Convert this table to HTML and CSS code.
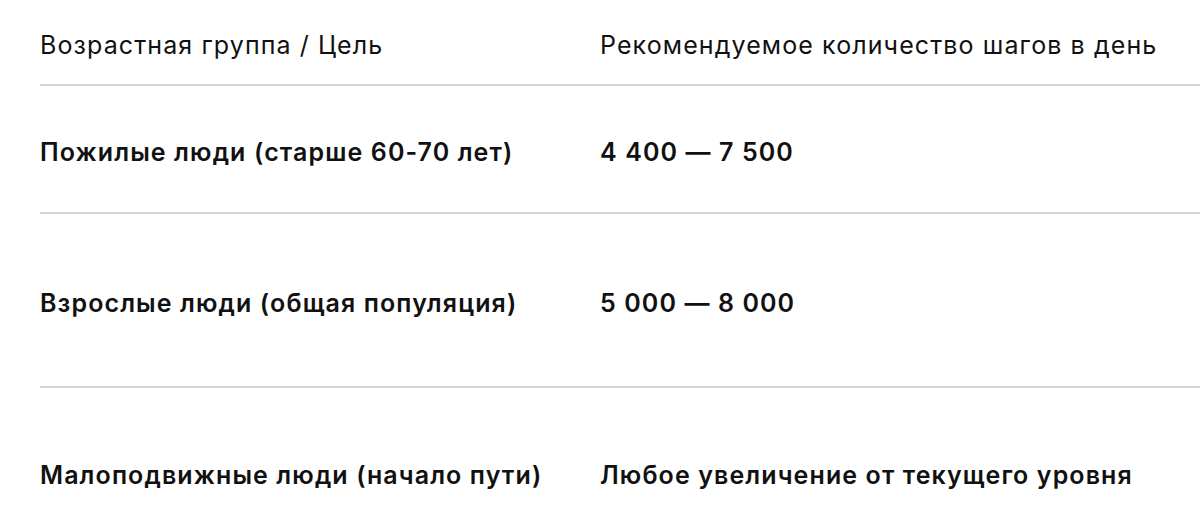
FILE: index.html
```html
<!DOCTYPE html>
<html lang="ru">
<head>
<meta charset="utf-8">
<link rel="stylesheet" href="styles.css">
</head>
<body>
<div class="table">
  <div class="row head">
    <div class="cell c1">Возрастная группа / Цель</div>
    <div class="cell c2">Рекомендуемое количество шагов в день</div>
  </div>
  <div class="row r1">
    <div class="cell c1">Пожилые люди (старше 60-70 лет)</div>
    <div class="cell c2">4 400 — 7 500</div>
  </div>
  <div class="row r2">
    <div class="cell c1">Взрослые люди (общая популяция)</div>
    <div class="cell c2">5 000 — 8 000</div>
  </div>
  <div class="row r3">
    <div class="cell c1">Малоподвижные люди (начало пути)</div>
    <div class="cell c2">Любое увеличение от текущего уровня</div>
  </div>
</div>
</body>
</html>
```
FILE: styles.css
```css
html, body {
  margin: 0;
  padding: 0;
  background: #fff;
  overflow: hidden;
}
body {
  font-family: Inter, "Noto Sans", sans-serif;
  color: #111;
  font-size: 25px;
  letter-spacing: 1.1px;
  width: 1200px;
  height: 532px;
}
.table {
  margin-left: 40px;
  width: 1200px;
}
.row {
  display: grid;
  grid-template-columns: 560px 1fr;
  align-items: center;
  border-bottom: 2px solid #d6d6d6;
  box-sizing: border-box;
}
.row.head { height: 86px; padding-top: 6px; font-weight: 400; }
.row.r1 { height: 128px; padding-top: 6px; font-weight: 600; }
.row.r2 { height: 174px; padding-top: 6px; font-weight: 600; }
.row.r3 { height: 170px; padding-top: 4px; font-weight: 600; border-bottom: none; }
.cell { line-height: 30px; white-space: nowrap; }
```
